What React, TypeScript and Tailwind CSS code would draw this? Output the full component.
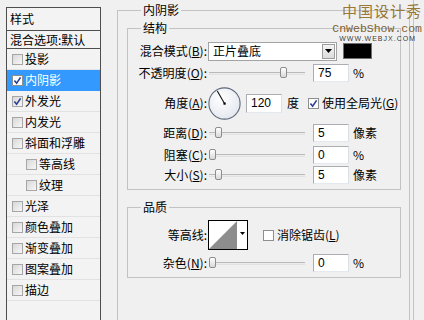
import type { ReactNode } from "react"

const layers = [
    { label: "投影", checked: false },
    { label: "内阴影", checked: true, active: true },
    { label: "外发光", checked: true },
    { label: "内发光", checked: false },
    { label: "斜面和浮雕", checked: false },
    { label: "等高线", checked: false, sub: true },
    { label: "纹理", checked: false, sub: true },
    { label: "光泽", checked: false },
    { label: "颜色叠加", checked: false },
    { label: "渐变叠加", checked: false },
    { label: "图案叠加", checked: false },
    { label: "描边", checked: false },
]

const Check = ({ checked, white }: { checked: boolean; white?: boolean }) => (
    <span
        className={`flex h-[11px] w-[11px] shrink-0 items-center justify-center border ${white ? "border-[#8e8f8f] bg-white" : "border-[#a6a6a6] bg-linear-to-br from-[#d8d8d8] to-[#f7f7f7]"}`}
    >
        {checked && (
            <svg viewBox="0 0 9 9" className="h-[9px] w-[9px]">
                <path d="M1.4 4.6 L3.6 7.2 L7.6 1.4" stroke="#2b3f94" strokeWidth="1.6" fill="none" />
            </svg>
        )}
    </span>
)

// label letter with underline, e.g. (B)
const Key = ({ k }: { k: string }) => (
    <>
        (<span className="underline underline-offset-1">{k}</span>):
    </>
)

const Label = ({ children }: { children: ReactNode }) => (
    <div className="w-[79px] shrink-0 text-right">{children}</div>
)

const Slider = ({ pos }: { pos: number }) => (
    <div className="relative ml-[2px] h-[12px] w-[96px] shrink-0">
        <div className="absolute left-0 right-0 top-[5px] h-[3px] border-y border-t-[#b9b9b9] border-b-[#e2e2e2] bg-[#ececec]" />
        <div
            className="absolute top-0 h-[11px] w-[7px] rounded-[2px] border border-[#8d8d8d] bg-linear-to-b from-white to-[#d9d9d9]"
            style={{ left: pos }}
        />
    </div>
)

const Field = ({ value, className = "" }: { value: string; className?: string }) => (
    <div
        className={`flex h-[18px] w-[36px] shrink-0 items-center border border-[#abadb3] border-b-[#e3e9ef] border-r-[#dbdfe6] bg-white pl-[4px] font-['Liberation_Sans',sans-serif] text-[12px] ${className}`}
    >
        {value}
    </div>
)

const SliderRow = ({ label, k, pos, value, unit, className = "" }: { label: string; k: string; pos: number; value: string; unit: string; className?: string }) => (
    <div className={`flex h-[20px] items-center ${className}`}>
        <Label>
            {label}
            <Key k={k} />
        </Label>
        <Slider pos={pos} />
        <Field value={value} className="ml-[8px]" />
        <span className="ml-[4px]">{unit}</span>
    </div>
)

export default function App() {
    return (
        <div className="relative flex h-[320px] w-[424px] items-start overflow-hidden bg-[#f0f0f0] font-['Noto_Sans_CJK_SC',sans-serif] text-[12px] leading-[14px] text-black">
            {/* left: style list */}
            <div className="ml-[6px] mt-[7px] flex h-[320px] w-[95px] shrink-0 flex-col border-x border-t border-[#4e4e4e] bg-[#f3f3f3]">
                <div className="flex h-[23px] shrink-0 items-center border-b border-[#4e4e4e] pl-[3px]">样式</div>
                <div className="flex h-[18px] shrink-0 items-center border-b border-[#4e4e4e] pl-[3px]">混合选项:默认</div>
                {layers.map((item) => (
                    <div
                        key={item.label}
                        className={`flex h-[21px] shrink-0 items-center gap-[2px] border-b ${item.active ? "border-[#3399ff] bg-[#3399ff] text-white" : "border-[#e2e2e2]"} ${item.sub ? "pl-[19px]" : "pl-[5px]"}`}
                    >
                        <Check checked={item.checked} white={item.active} />
                        <span>{item.label}</span>
                    </div>
                ))}
            </div>

            {/* right: inner shadow settings */}
            <fieldset className="ml-[16px] mt-[3px] h-[340px] w-[293px] shrink-0 border border-[#c3c3c3] px-[9px] pr-[8px] pt-[4px]">
                <legend className="ml-[14px] px-[2px] leading-[14px]">内阴影</legend>

                <fieldset className="border border-[#c3c3c3] pb-[4px]">
                    <legend className="ml-[13px] px-[2px] leading-[14px]">结构</legend>

                    <div className="mt-[6px] flex h-[20px] items-center">
                        <Label>
                            混合模式
                            <Key k="B" />
                        </Label>
                        <div className="ml-[1px] flex h-[19px] w-[129px] shrink-0 items-center border border-[#a3a3a3] bg-white">
                            <span className="flex-1 pl-[4px]">正片叠底</span>
                            <span className="mr-[1px] flex h-[15px] w-[13px] items-center justify-center border border-[#9c9c9c] bg-linear-to-b from-[#f4f4f4] to-[#dcdcdc]">
                                <svg width="7" height="4" viewBox="0 0 7 4">
                                    <path d="M0 0 H7 L3.5 4 Z" fill="#000" />
                                </svg>
                            </span>
                        </div>
                        <div className="ml-[6px] h-[16px] w-[29px] shrink-0 border border-[#6f6f6f] bg-black" />
                    </div>

                    <SliderRow label="不透明度" k="O" pos={71} value="75" unit="%" className="mt-[2px]" />

                    <div className="mt-[4px] flex h-[32px] items-center">
                        <Label>
                            角度
                            <Key k="A" />
                        </Label>
                        <svg width="33" height="33" viewBox="0 0 33 33" className="ml-[1px] shrink-0">
                            <defs>
                                <radialGradient id="dial" cx="0.4" cy="0.35" r="0.7">
                                    <stop offset="0" stopColor="#ffffff" />
                                    <stop offset="1" stopColor="#e3e7ee" />
                                </radialGradient>
                            </defs>
                            <circle cx="16.5" cy="16.5" r="15.6" fill="url(#dial)" stroke="#5b687a" strokeWidth="1.1" />
                            <line x1="16.5" y1="16.5" x2="9.3" y2="4" stroke="#111" strokeWidth="1.1" />
                            <rect x="15.5" y="15.5" width="2.2" height="2.2" fill="#000" />
                        </svg>
                        <Field value="120" className="ml-[5px] h-[19px]" />
                        <span className="ml-[5px]">度</span>
                        <span className="ml-[9px]">
                            <Check checked white />
                        </span>
                        <span className="ml-[3px]">
                            使用全局光(<span className="underline underline-offset-1">G</span>)
                        </span>
                    </div>

                    <SliderRow label="距离" k="D" pos={6} value="5" unit="像素" className="mt-[4px]" />
                    <SliderRow label="阻塞" k="C" pos={0} value="0" unit="%" className="mt-[2px]" />
                    <SliderRow label="大小" k="S" pos={6} value="5" unit="像素" />
                </fieldset>

                <fieldset className="mt-[10px] border border-[#c3c3c3] pb-[4px]">
                    <legend className="ml-[13px] px-[2px] leading-[14px]">品质</legend>

                    <div className="mt-[6px] flex h-[30px] items-center">
                        <Label>等高线:</Label>
                        <div className="ml-[1px] flex h-[30px] w-[40px] shrink-0 border border-black bg-white">
                            <svg width="28" height="28" viewBox="0 0 28 28" className="shrink-0">
                                <polygon points="0,28 28,0 28,28" fill="#8d8d8d" />
                            </svg>
                            <div className="flex flex-1 items-center justify-center pb-[4px]">
                                <svg width="5" height="3" viewBox="0 0 5 3">
                                    <path d="M0 0 H5 L2.5 3 Z" fill="#000" />
                                </svg>
                            </div>
                        </div>
                        <span className="ml-[15px]">
                            <Check checked={false} white />
                        </span>
                        <span className="ml-[3px]">
                            消除锯齿(<span className="underline underline-offset-1">L</span>)
                        </span>
                    </div>

                    <SliderRow label="杂色" k="N" pos={0} value="0" unit="%" className="mt-[3px]" />
                </fieldset>
            </fieldset>

            <div className="ml-[3px] h-[320px] flex-1 border-l border-[#c3c3c3]" />

            {/* watermark */}
            <div className="pointer-events-none absolute right-[2px] top-0 flex flex-col items-end">
                <span className="text-[15px] leading-[22px] tracking-[1px] text-[#9a7836]">中国设计秀</span>
                <span className="font-['Liberation_Mono',monospace] text-[11.5px] leading-[13px] text-[#7c6232]">CnWebShow.com</span>
                <span className="mr-[6px] font-['Liberation_Sans',sans-serif] text-[7px] leading-[8px] tracking-[1px] text-black/80">WWW.WEBJX.COM</span>
            </div>
        </div>
    )
}
